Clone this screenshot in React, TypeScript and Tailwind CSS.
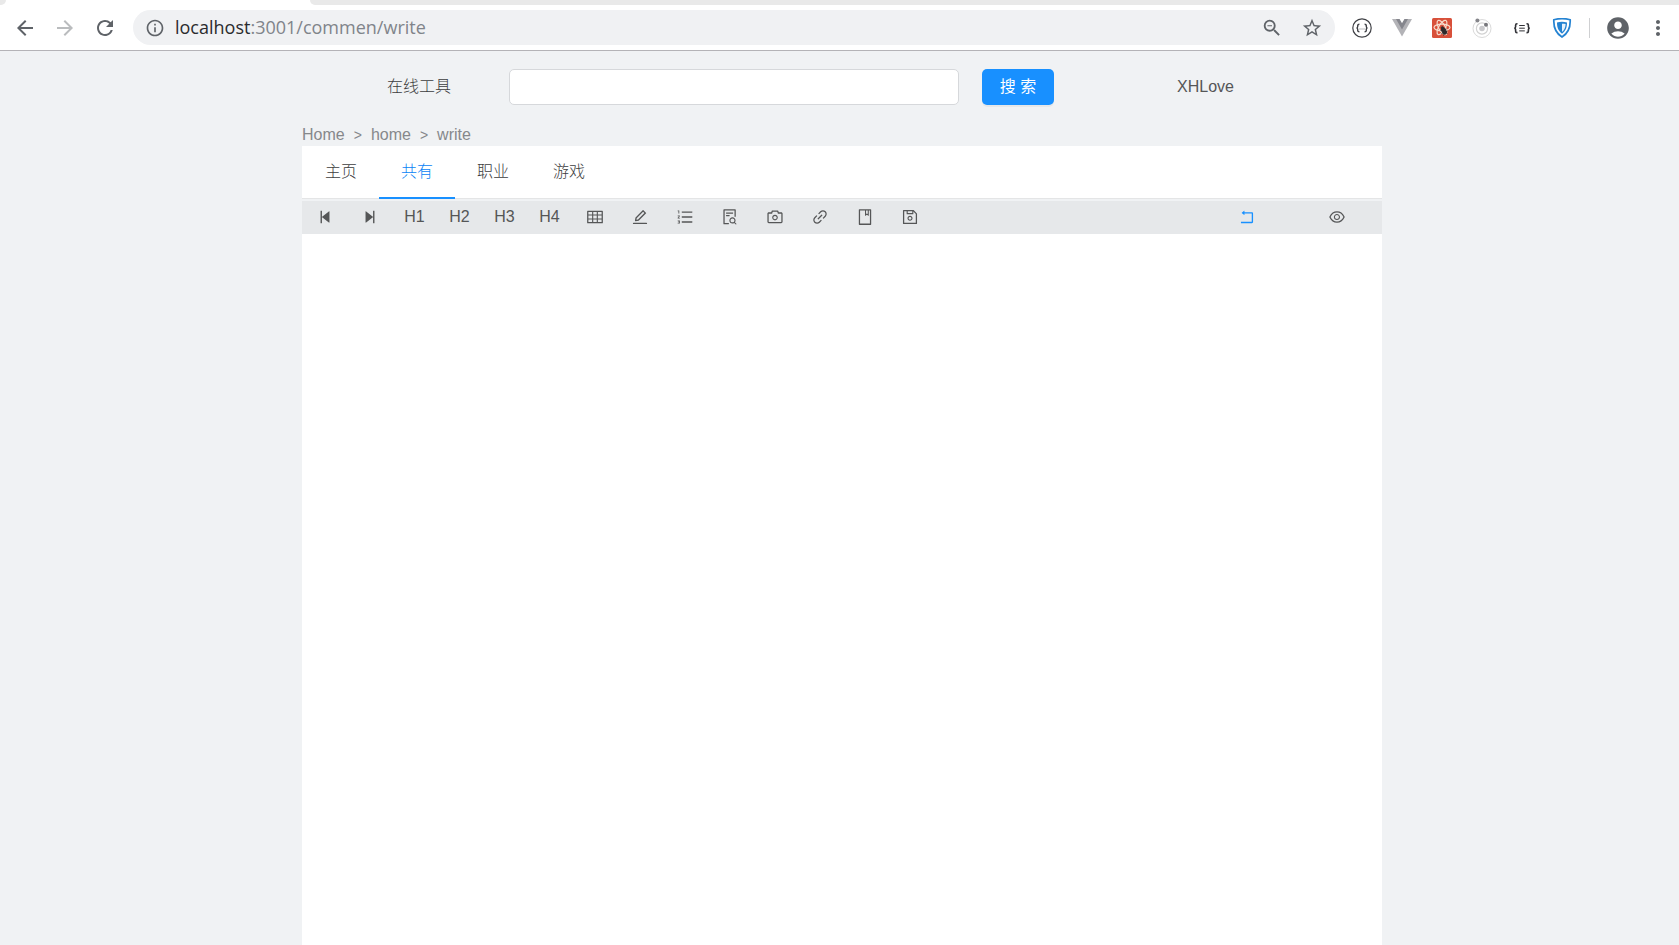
import React from "react";
import {
  AiFillStepBackward,
  AiFillStepForward,
  AiOutlineTable,
  AiOutlineEdit,
  AiOutlineOrderedList,
  AiOutlineFileSearch,
  AiOutlineCamera,
  AiOutlineLink,
  AiOutlineBook,
  AiOutlineSave,
  AiOutlineRollback,
  AiOutlineEye,
} from "react-icons/ai";
import {
  MdArrowBack,
  MdArrowForward,
  MdRefresh,
  MdInfoOutline,
  MdStarBorder,
  MdAccountCircle,
  MdMoreVert,
  MdZoomOut,
} from "react-icons/md";

function BracesRingIcon() {
  return (
    <svg viewBox="0 0 20 20" className="size-5" fill="none" stroke="#3f4045">
      <circle cx="10" cy="10" r="9.2" strokeWidth="1.2" />
      <path d="M7.4 6.2c-1.600 0-1.700.6-1.700 1.400v1c0 .9-.4 1.400-1.200 1.400.8 0 1.200.5 1.200 1.400v1c0 .8.1 1.400 1.700 1.400M12.600 6.200c1.600 0 1.700.6 1.700 1.400v1c0 .9.4 1.400 1.200 1.400-.8 0-1.200.5-1.200 1.400v1c0 .8-.1 1.400-1.700 1.400" strokeWidth="1.4" />
      <path d="M7.500 11h1M9.500 11h1M11.500 11h1" strokeWidth="1" stroke="#77787c" />
    </svg>
  );
}

function VueIcon() {
  return (
    <svg viewBox="0 0 20 20" className="size-5">
      <path d="M0 1h20L10 18.500z" fill="#b3b3b7" />
      <path d="M4 1h3.600L10 5l2.400-4H16L10 11.500z" fill="#85868d" />
      <path d="M7.600 1h4.800L10 5z" fill="#fff" />
    </svg>
  );
}

function ReactBugIcon() {
  return (
    <svg viewBox="0 0 20 20" className="size-5">
      <rect width="20" height="20" rx="1.500" fill="#d8503a" />
      <g fill="none" stroke="#f6dccd" strokeWidth="1.200">
        <ellipse cx="10" cy="9.500" rx="8" ry="3.300" />
        <ellipse cx="10" cy="9.500" rx="8" ry="3.300" transform="rotate(60 10 9.500)" />
        <ellipse cx="10" cy="9.500" rx="8" ry="3.300" transform="rotate(120 10 9.500)" />
      </g>
      <g fill="#2f2a2b" stroke="#2f2a2b" strokeWidth="0.900">
        <ellipse cx="12" cy="13" rx="1.900" ry="3.400" transform="rotate(-30 12 13)" />
        <circle cx="10.300" cy="9.800" r="1.100" />
        <path d="M8.500 12.500l6-1.500M9.500 15.500l6-2.500M11.500 17.500l1-3M15.500 15.500l-1.500-1" fill="none" />
      </g>
    </svg>
  );
}

function OrbitIcon() {
  return (
    <svg viewBox="0 0 20 20" className="size-5" fill="none">
      <circle cx="10" cy="10.500" r="9" stroke="#dadada" />
      <circle cx="10" cy="10.500" r="5.600" stroke="#d2d2d2" strokeWidth="1.200" />
      <circle cx="10" cy="10.500" r="2.800" fill="#c9c9cc" />
      <circle cx="5.400" cy="2.600" r="2" fill="#85858a" />
      <circle cx="14" cy="6.800" r="2" fill="#77777c" />
    </svg>
  );
}

function JsonIcon() {
  return (
    <svg viewBox="0 0 20 20" className="size-5" fill="none" stroke="#303136">
      <path d="M5.500 5.800H5c-1.100 0-1.400.5-1.400 1.400v1.600c0 .9-.5 1.400-1.400 1.400.9 0 1.400.5 1.400 1.400v1.600c0 .9.3 1.400 1.400 1.400h.5M14.500 5.800h.5c1.100 0 1.400.5 1.400 1.400v1.600c0 .9.5 1.400 1.400 1.400-.9 0-1.400.5-1.400 1.400v1.600c0 .9-.3 1.400-1.400 1.400h-.5" strokeWidth="1.600" />
      <path d="M7.200 7.500h5.600M7.200 10.200h5.600M7.200 12.900h5.600" strokeWidth="1" />
    </svg>
  );
}

function ShieldIcon() {
  return (
    <svg viewBox="0 0 20 20" className="size-5">
      <path d="M1.800 1.800C7 .2 13 .2 18.200 1.800c.3 6.700-1.400 13-8.200 17.200C3.200 14.800 1.500 8.500 1.800 1.800z" fill="none" stroke="#2583d2" strokeWidth="1.700" />
      <path d="M5 4.500c3.200-.9 6.800-.9 10 0 0 4.600-1 8.300-5 11.200C6 12.800 5 9.100 5 4.500z" fill="#2583d2" />
      <path d="M10 5.700c1.300 0 2.500.1 3.600.4-.1 3.200-.9 5.700-3.600 7.900z" fill="#e6f2fc" />
    </svg>
  );
}

function BrowserButton({ label, children }: { label: string; children: React.ReactNode }) {
  return (
    <button type="button" aria-label={label} className="flex w-10 shrink-0 items-center justify-center text-[#5f6368]">
      {children}
    </button>
  );
}

const extensions = [
  { label: "Braces", icon: <BracesRingIcon /> },
  { label: "Vue", icon: <VueIcon /> },
  { label: "React", icon: <ReactBugIcon /> },
  { label: "Orbit", icon: <OrbitIcon /> },
  { label: "JSON", icon: <JsonIcon /> },
  { label: "Shield", icon: <ShieldIcon /> },
];

function BrowserBar() {
  return (
    <div className="border-b border-[#b4b3b7] bg-white">
      <div className="flex h-[5px] justify-between">
        <div className="w-[6px] rounded-br-lg bg-[#e9e9e9]" />
        <div className="ml-[304px] flex-1 rounded-bl-lg bg-[#e9e9e9]" />
      </div>
      <div className="flex h-[45px] items-center pl-[5px] pr-px">
        <BrowserButton label="Back"><MdArrowBack className="size-6" /></BrowserButton>
        <BrowserButton label="Forward"><MdArrowForward className="size-6 text-[#babcbe]" /></BrowserButton>
        <BrowserButton label="Reload"><MdRefresh className="size-6" /></BrowserButton>
        <div className="ml-2 flex h-[35px] flex-1 items-center rounded-full bg-[#f0f1f3] pl-3">
          <MdInfoOutline className="size-5 shrink-0 text-[#5f6368]" />
          <a href="#address" className="ml-[10px] flex-1 pb-px font-['Open_Sans','Noto_Sans',sans-serif] text-lg leading-6 font-normal text-[#80848a]">
            <span className="text-[#2a2b2e]">localhost</span>:3001/commen/write
          </a>
          <BrowserButton label="Zoom out"><MdZoomOut className="size-[22px]" /></BrowserButton>
          <BrowserButton label="Bookmark"><MdStarBorder className="size-[22px]" /></BrowserButton>
          <div className="w-[3px]" />
        </div>
        <div className="ml-[7px] flex items-center">
          {extensions.map((e) => (
            <BrowserButton key={e.label} label={e.label}>{e.icon}</BrowserButton>
          ))}
        </div>
        <div className="ml-[7px] h-5 w-px bg-[#cfd0d2]" />
        <div className="ml-2 flex">
          <BrowserButton label="Profile"><MdAccountCircle className="size-[26px]" /></BrowserButton>
          <BrowserButton label="Menu"><MdMoreVert className="size-6" /></BrowserButton>
        </div>
      </div>
    </div>
  );
}

function Header() {
  return (
    <header className="flex h-[72px] items-center">
      <a href="#tools" className="ml-[85px] w-[122px] text-[#3c3d3e]">在线工具</a>
      <input
        type="text"
        aria-label="搜索"
        className="h-9 w-[450px] rounded-[5px] border border-[#d6d8db] bg-white px-3 outline-none"
      />
      <button
        type="button"
        className="ml-[23px] h-9 w-[72px] rounded-[5px] bg-[#1890ff] font-normal text-white shadow-[0_2px_0_rgba(0,0,0,0.045)]"
      >
        搜 索
      </button>
      <a href="#user" className="ml-[123px]">XHLove</a>
    </header>
  );
}

const tabs = [
  { label: "主页", active: false },
  { label: "共有", active: true },
  { label: "职业", active: false },
  { label: "游戏", active: false },
];

const tools = [
  { label: "Step backward", content: <AiFillStepBackward className="size-[18px]" /> },
  { label: "Step forward", content: <AiFillStepForward className="size-[18px]" /> },
  { label: "Heading 1", content: "H1" },
  { label: "Heading 2", content: "H2" },
  { label: "Heading 3", content: "H3" },
  { label: "Heading 4", content: "H4" },
  { label: "Table", content: <AiOutlineTable className="size-[18px]" /> },
  { label: "Edit", content: <AiOutlineEdit className="size-[18px]" /> },
  { label: "Ordered list", content: <AiOutlineOrderedList className="size-[18px]" /> },
  { label: "Find in file", content: <AiOutlineFileSearch className="size-[18px]" /> },
  { label: "Image", content: <AiOutlineCamera className="size-[18px]" /> },
  { label: "Link", content: <AiOutlineLink className="size-[18px]" /> },
  { label: "Book", content: <AiOutlineBook className="size-[18px]" /> },
  { label: "Save", content: <AiOutlineSave className="size-[18px]" /> },
];

export default function App() {
  return (
    <div className="flex min-h-screen flex-col bg-[#f0f2f4] font-['Liberation_Sans','Noto_Sans_CJK_SC',sans-serif] text-base font-light text-[#555657]">
      <BrowserBar />
      <div className="flex flex-1 justify-center pl-[5px]">
        <div className="flex w-full max-w-[1080px] flex-col">
          <Header />
          <nav aria-label="Breadcrumb" className="flex h-[23px] items-center text-[#86888b]">
            <a href="#home">Home</a>
            <span className="mx-[9px] text-sm">&gt;</span>
            <a href="#home-page">home</a>
            <span className="mx-[9px] text-sm">&gt;</span>
            <span>write</span>
          </nav>
          <nav aria-label="Main" className="flex h-[53px] border-b border-[#e4e5e6] bg-white pl-px">
            {tabs.map((t) => (
              <a
                key={t.label}
                href={"#" + t.label}
                className={
                  t.active
                    ? "-mb-px flex items-center border-b-2 border-[#1890ff] px-[22px] text-[#0a84f5]"
                    : "-mb-px flex items-center border-b-2 border-transparent px-[22px] text-[#3c3d3e]"
                }
              >
                {t.label}
              </a>
            ))}
          </nav>
          <div className="mt-[2px] grid h-[33px] grid-cols-24 bg-[#e6e8ea]">
            {tools.map((t) => (
              <button key={t.label} type="button" aria-label={t.label} className="flex items-center justify-center pb-px">
                {t.content}
              </button>
            ))}
            <button type="button" aria-label="Rollback" className="col-span-2 col-start-21 flex items-center justify-center pb-px text-[#1890ff]">
              <AiOutlineRollback className="size-[18px]" />
            </button>
            <button type="button" aria-label="Preview" className="col-span-2 flex items-center justify-center pb-px">
              <AiOutlineEye className="size-[18px]" />
            </button>
          </div>
          <textarea aria-label="Editor" className="w-full flex-1 resize-none bg-white p-3 outline-none" />
        </div>
      </div>
    </div>
  );
}
